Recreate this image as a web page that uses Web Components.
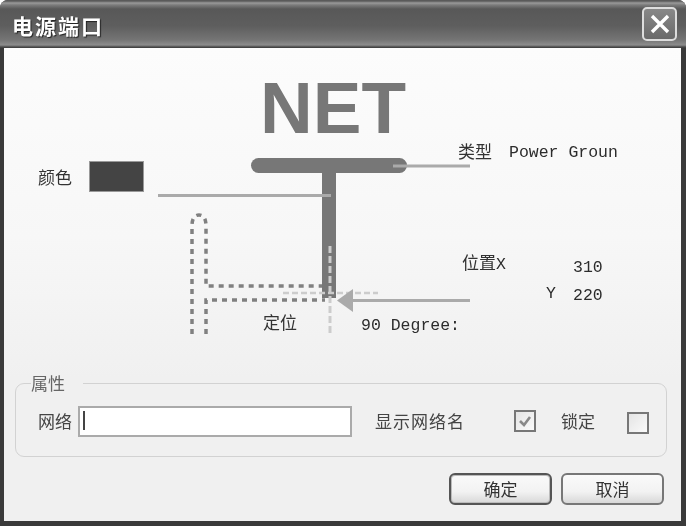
<!DOCTYPE html>
<html lang="zh"><head><meta charset="utf-8"><title>电源端口</title>
<style>html,body{margin:0;padding:0;background:#fff}body{width:686px;height:526px;overflow:hidden;font-family:"Noto Sans CJK SC","Liberation Sans",sans-serif}</style>
</head><body>
<power-dialog heading="电源端口">
  <net-diagram></net-diagram>
  <prop-group legend="属性"></prop-group>
  <div slot="actions" style="display:flex;gap:9px">
    <dlg-button primary>确定</dlg-button>
    <dlg-button>取消</dlg-button>
  </div>
</power-dialog>
<script>
function def(name, html, extra){
  customElements.define(name, class extends HTMLElement{
    constructor(){super();this.attachShadow({mode:'open'}).innerHTML=html;}
    connectedCallback(){extra&&extra.call(this);}
  });
}
def('power-dialog',`<style>
:host{display:flex;flex-direction:column;width:686px;height:526px;box-sizing:border-box;background:#3a3a3a;border-radius:8px 8px 0 0;overflow:hidden;filter:blur(.35px)}
.bar{height:48px;flex:none;display:flex;align-items:center;justify-content:space-between;padding:0 9px 0 12px;box-sizing:border-box;
background:linear-gradient(#5a5a5a 0,#5a5a5a 1px,#9a9a9a 3px,#7c7c7c 5px,#585858 9px,#5e5e5e 26px,#757575 40px,#8c8c8c 45px,#4a4a4a 47px,#3c3c3c 48px)}
h1{margin:3px 0 0;font:700 21px/1 "Noto Sans CJK SC",sans-serif;letter-spacing:2px;color:#fff;text-shadow:1px 1px 1px #222}
.x{width:35px;height:34px;box-sizing:border-box;border:2px solid #ddd;border-radius:5px;background:linear-gradient(#888,#6a6a6a);display:flex;align-items:center;justify-content:center}
.main{flex:1;margin:0 5px 5px 4px;display:flex;flex-direction:column;background:linear-gradient(#fcfcfc,#f7f7f7 40%,#f0f0f0 70%);min-height:0}
.foot{display:flex;justify-content:flex-end;padding:16px 17px 16px 0}
</style>
<div class="bar"><h1 id="t"></h1><div class="x"><svg width="22" height="22" viewBox="0 0 22 22"><path d="M3 3 19 19M19 3 3 19" stroke="#fff" stroke-width="3.4" fill="none"/></svg></div></div>
<div class="main"><slot></slot><div class="foot"><slot name="actions"></slot></div></div>`,
function(){this.shadowRoot.getElementById('t').textContent=this.getAttribute('heading');});

def('net-diagram',`<style>
:host{display:block;position:relative;height:325px;flex:none;color:#333;font:17px/20px "Noto Sans CJK SC",sans-serif}
svg{position:absolute;left:0;top:0}
.l{position:absolute;white-space:nowrap;transform:translateY(-50%)}
.m{font-family:"Liberation Mono","Noto Sans CJK SC",monospace;font-size:16.5px;color:#2c2c2c}
.net{position:absolute;left:256px;top:18px;font:700 73px/84px "Liberation Sans",sans-serif;color:#777}
.sw{position:absolute;left:85px;top:113px;width:55px;height:31px;box-sizing:border-box;background:#444;border:1px solid #999}
</style>
<svg width="677" height="325" viewBox="4 48 677 325">
  <g fill="none">
    <rect x="251" y="158" width="156" height="15" rx="7.5" fill="#777"/>
    <rect x="322" y="170" width="14" height="128" fill="#777"/>
    <path d="M393 166H470" stroke="#aaa" stroke-width="3"/>
    <path d="M158 195.500H331" stroke="#aaa" stroke-width="3"/>
    <path d="M192 334V226Q192 215 199 215Q206 215 206 226V286H322M206 334V300H325" stroke="#808080" stroke-width="3.500" stroke-dasharray="5 5"/>
    <path d="M330 246V335" stroke="#ccc" stroke-width="3" stroke-dasharray="7 3"/>
    <path d="M283 293H378" stroke="#ccc" stroke-width="2.500" stroke-dasharray="6 3"/>
    <path d="M350 300.500H470" stroke="#aaa" stroke-width="3"/>
    <path d="M337 300.500 353 289V312Z" fill="#aaa"/>
  </g>
</svg>
<div class="net">NET</div>
<div class="sw"></div>
<span class="l" style="left:34px;top:129px">颜色</span>
<span class="l" style="left:454px;top:103px">类型</span>
<span class="l m" style="left:505px;top:105px">Power Groun</span>
<span class="l" style="left:458px;top:215px">位置<span class="m">X</span></span>
<span class="l m" style="left:569px;top:220px">310</span>
<span class="l m" style="left:542px;top:246px">Y</span>
<span class="l m" style="left:569px;top:248px">220</span>
<span class="l" style="left:259px;top:274px">定位</span>
<span class="l m" style="left:357px;top:278px">90 Degree:</span>`);

def('prop-group',`<style>
:host{display:block;margin:0 14px 0 11px;color:#444;font:17px/20px "Noto Sans CJK SC",sans-serif}
fieldset{margin:0;height:84px;box-sizing:border-box;border:1px solid #d2d2d2;border-radius:9px;padding:0 0 0 22px;display:flex;min-width:0}
legend{padding:0 18px 0 0;margin-left:-7px;height:20px;color:#666}
.row{display:flex;align-items:center;margin-top:12px;height:32px}
.inp{width:274px;height:31px;box-sizing:border-box;border:2px solid #aaa;background:#fff;margin-left:6px;padding:3px 0 0 3px}
.inp i{display:block;width:2px;height:19px;background:#444}
.cb{width:22px;height:22px;box-sizing:border-box;border:2px solid #777;background:linear-gradient(135deg,#e4e4e4,#fafafa);display:flex;align-items:center;justify-content:center;flex:none}
</style>
<fieldset><legend>属性</legend><div class="row">
<span>网络</span><div class="inp"><i></i></div>
<span style="margin-left:23px;letter-spacing:1px">显示网络名</span>
<div class="cb" style="margin-left:49px"><svg width="16" height="16" viewBox="0 0 16 16"><path d="M3 8 7 12 13 4" stroke="#888" stroke-width="2.600" fill="none"/></svg></div>
<span style="margin-left:25px">锁定</span>
<div class="cb" style="margin-left:32px;margin-top:3px"></div>
</div></fieldset>`);

def('dlg-button',`<style>
:host{display:block;width:103px;height:32px;box-sizing:border-box;border:2px solid #777;border-radius:6px;background:linear-gradient(#fafafa,#f2f2f2 60%,#d8d8d8);color:#333;font:17px/28px "Noto Sans CJK SC",sans-serif;text-align:center}
:host([primary]){border-color:#555;box-shadow:inset 0 0 0 1px #bbb}
</style><slot></slot>`);
</script>
</body></html>
